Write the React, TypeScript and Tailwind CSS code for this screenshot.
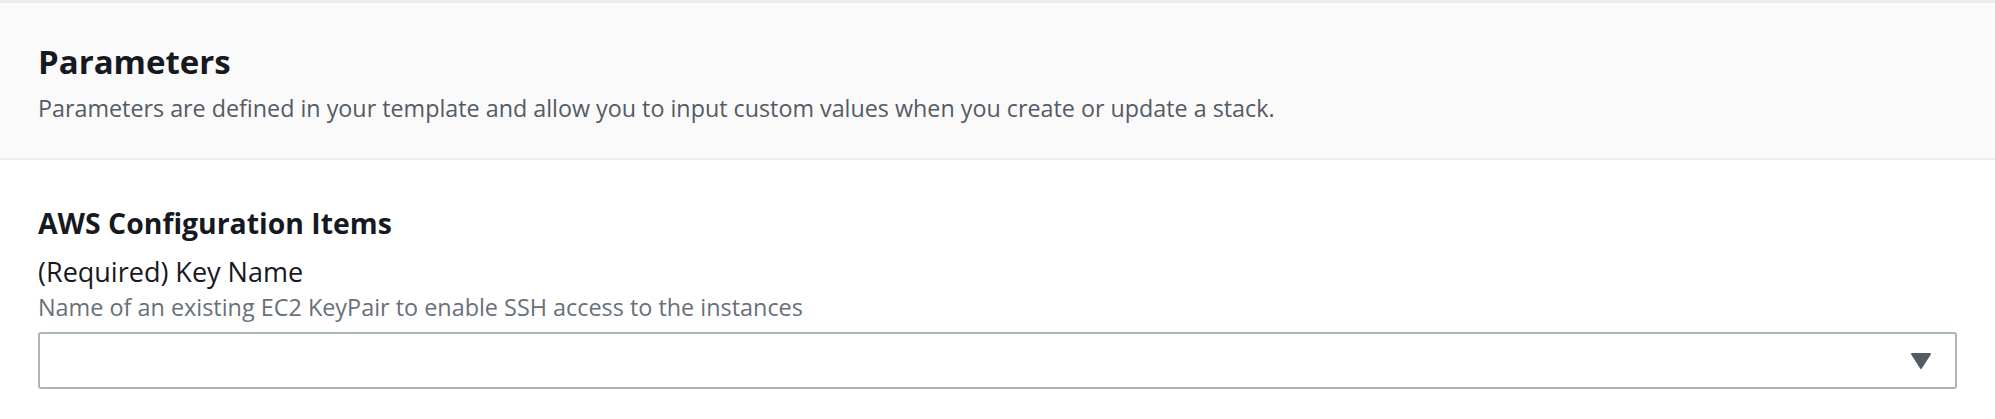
export default function App() {
  return (
    <div className="min-h-[419px] w-full bg-white font-['Open_Sans',sans-serif]">
      {/* Header */}
      <div className="border-t-[3px] border-b-2 border-[#eaeded] bg-[#fafafa] px-[38px] pt-[39px] pb-[35px]">
        <h2 className="text-[33px] font-bold leading-[40px] text-[#16191f]">Parameters</h2>
        <p className="mt-[11px] text-[23.3px] leading-[30px] text-[#545b64]">
          Parameters are defined in your template and allow you to input custom values when you create or update a
          stack.
        </p>
      </div>

      {/* Body */}
      <div className="px-[38px] pt-[45px]">
        <h3 className="text-[28.4px] font-bold leading-[36px] text-[#16191f]">AWS Configuration Items</h3>
        <div className="mt-[14px] text-[27px] leading-[34px] text-[#16191f]">(Required) Key Name</div>
        <div className="mt-[3px] text-[23.4px] leading-[30px] text-[#687078]">
          Name of an existing EC2 KeyPair to enable SSH access to the instances
        </div>
        <button className="mt-[10px] flex h-[57px] w-full items-center justify-end rounded-[3px] border-2 border-[#aab7b8] bg-white pr-[24px]">
          <svg width="20" height="16" viewBox="0 0 20 16">
            <path d="M1 1 H19 L10 15 Z" fill="#545b64" stroke="#545b64" strokeWidth="2" strokeLinejoin="round" />
          </svg>
        </button>
      </div>
    </div>
  )
}
